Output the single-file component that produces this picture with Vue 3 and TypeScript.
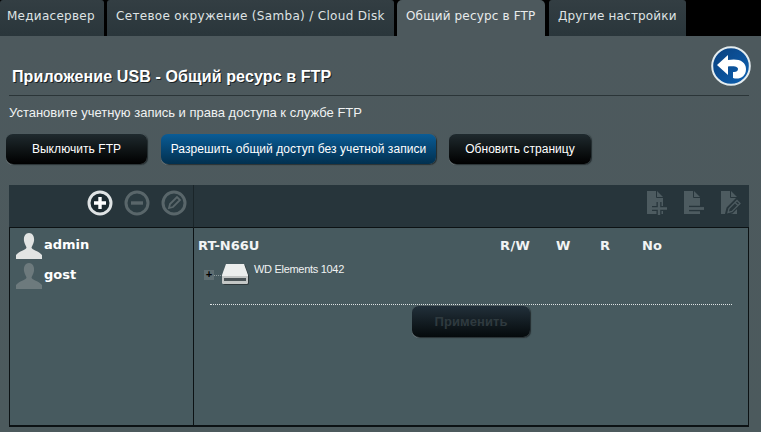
<script setup lang="ts">
const tabs = [
  { label: 'Медиасервер', width: 104 },
  { label: 'Сетевое окружение (Samba) / Cloud Disk', width: 287 },
  { label: 'Общий ресурс в FTP', width: 148, active: true },
  { label: 'Другие настройки', width: 137 },
]
const actions = [
  { label: 'Выключить FTP', cls: 'b1' },
  { label: 'Разрешить общий доступ без учетной записи', cls: 'b2 blue' },
  { label: 'Обновить страницу', cls: 'b3' },
]
</script>

<template>
  <div class="page">
    <nav class="tabs">
      <div
        v-for="t in tabs"
        :key="t.label"
        class="tab"
        :class="{ active: t.active }"
        :style="{ width: t.width + 'px' }"
      >{{ t.label }}</div>
    </nav>
    <main class="content">
      <header class="title-row">
        <h1>Приложение USB - Общий ресурс в FTP</h1>
        <svg class="back" viewBox="0 0 40 40" width="40" height="40">
          <defs>
            <linearGradient id="bg" x1="0" y1="0" x2="1" y2="1">
              <stop offset="0" stop-color="#0a3f7c" />
              <stop offset="1" stop-color="#0d62b4" />
            </linearGradient>
          </defs>
          <circle cx="20" cy="20" r="18.800" fill="url(#bg)" stroke="#e4ecef" stroke-width="2" />
          <path d="M6 19 L17 9 V14 C27 12 35 15 35 23 C35 31 28 34 22 32 V26 C25 26.500 27 25 27 23 C27 20.500 22 20 17 20.500 V29 Z" fill="#fff" />
        </svg>
      </header>
      <p class="desc">Установите учетную запись и права доступа к службе FTP</p>
      <div class="actions">
        <button v-for="a in actions" :key="a.label" class="btn" :class="a.cls">{{ a.label }}</button>
      </div>
      <section class="grid">
        <div class="bar bar-left">
          <svg viewBox="0 0 26 26" width="26" height="26">
            <circle cx="13" cy="13" r="11" fill="#1c2a30" stroke="#dfe3e4" stroke-width="3" />
            <path d="M13 7 V19 M7 13 H19" stroke="#fff" stroke-width="3.400" />
          </svg>
          <svg viewBox="0 0 26 26" width="26" height="26">
            <circle cx="13" cy="13" r="11" fill="#2b3b41" stroke="#59666a" stroke-width="3" />
            <path d="M7 13 H19" stroke="#59666a" stroke-width="3.400" />
          </svg>
          <svg viewBox="0 0 26 26" width="26" height="26">
            <circle cx="13" cy="13" r="11" fill="#2b3b41" stroke="#59666a" stroke-width="3" />
            <path d="M8 18 L9 14 L16 7 L19 10 L12 17 Z" fill="none" stroke="#59666a" stroke-width="1.800" />
          </svg>
        </div>
        <div class="bar bar-right">
          <svg viewBox="0 0 22 24" width="22" height="24">
            <path d="M1 0 H11 L17 6 V23 H1 Z" fill="#4d5b60" />
            <path d="M10.500 0 V6.500 H17" fill="none" stroke="#27353b" stroke-width="1" />
            <path d="M13 11 V24 M6 17.500 H21" stroke="#27353b" stroke-width="5" />
            <path d="M13 11 V24 M6 17.500 H21" stroke="#4d5b60" stroke-width="2.400" />
          </svg>
          <svg viewBox="0 0 22 24" width="22" height="24">
            <path d="M1 0 H11 L17 6 V23 H1 Z" fill="#4d5b60" />
            <path d="M10.500 0 V6.500 H17" fill="none" stroke="#27353b" stroke-width="1" />
            <path d="M6 17.500 H21" stroke="#27353b" stroke-width="5.500" />
            <path d="M6 17.500 H21" stroke="#4d5b60" stroke-width="2.800" />
          </svg>
          <svg viewBox="0 0 22 24" width="22" height="24">
            <path d="M1 0 H11 L17 6 V23 H1 Z" fill="#4d5b60" />
            <path d="M10.500 0 V6.500 H17" fill="none" stroke="#27353b" stroke-width="1" />
            <path d="M6 23 L7.500 17 L17 7.500 L21.500 12 L12 21.500 Z" fill="#27353b" stroke="#27353b" stroke-width="2" />
            <path d="M8 21.500 L9 17.500 L17 9.500 L20 12.500 L12 20.500 Z M15 11.500 L18 14.500" fill="none" stroke="#4d5b60" stroke-width="1.300" />
          </svg>
        </div>
        <aside class="users">
          <div class="user">
            <svg viewBox="0 0 28 28" width="28" height="28">
              <path d="M14 1 C18 1 19.500 5 19 9 C18.500 12 17 14 16.500 15.500 C17 18 24 19 27 23 V27 H1 V23 C4 19 11 18 11.500 15.500 C11 14 9.500 12 9 9 C8.500 5 10 1 14 1 Z" fill="#e2e4e3" />
            </svg>
            <span>admin</span>
          </div>
          <div class="user off">
            <svg viewBox="0 0 28 28" width="28" height="28">
              <path d="M14 1 C18 1 19.500 5 19 9 C18.500 12 17 14 16.500 15.500 C17 18 24 19 27 23 V27 H1 V23 C4 19 11 18 11.500 15.500 C11 14 9.500 12 9 9 C8.500 5 10 1 14 1 Z" fill="#6d7a7d" />
            </svg>
            <span>gost</span>
          </div>
        </aside>
        <div class="tree">
          <div class="tree-head">
            <strong class="router">RT-N66U</strong>
            <strong class="perm p1">R/W</strong>
            <strong class="perm p2">W</strong>
            <strong class="perm p3">R</strong>
            <strong class="perm p4">No</strong>
          </div>
          <div class="disk">
            <span class="expander"><i>+</i></span>
            <span class="link"></span>
            <svg class="hdd" viewBox="0 0 28 22" width="28" height="22">
              <path d="M5 1 H23 L27 12 V19 Q27 21 25 21 H3 Q1 21 1 19 V12 Z" fill="#2e383b" transform="translate(1 1)" />
              <path d="M5 1 H23 L27 12 V19 Q27 21 25 21 H3 Q1 21 1 19 V12 Z" fill="#eceeed" />
              <path d="M1 13 H27 V19 Q27 21 25 21 H3 Q1 21 1 19 Z" fill="#c3c6c5" />
              <rect x="3" y="15" width="22" height="3" fill="#4a5356" />
            </svg>
            <span class="disk-name">WD Elements 1042</span>
          </div>
          <div class="rule"></div>
          <div class="apply-row">
            <button class="btn apply" disabled>Применить</button>
          </div>
        </div>
      </section>
    </main>
  </div>
</template>

<style>
html, body { margin: 0; background: #000; }
</style>

<style scoped>
.page {
  width: 761px;
  height: 432px;
  overflow: hidden;
  background: #4d595d;
  font-family: "Liberation Sans", Arial, sans-serif;
  display: flex;
  flex-direction: column;
}
.tabs {
  height: 36px;
  background: #000;
  display: flex;
  gap: 3px;
  flex: none;
}
.tab {
  box-sizing: border-box;
  height: 36px;
  padding-left: 8px;
  white-space: nowrap;
  font: 12px/32px "DejaVu Sans", sans-serif;
  letter-spacing: 0.17px;
  color: #dfe3e4;
  background: linear-gradient(#333e43, #2a363b);
  border-radius: 3px 3px 0 0;
}
.tab:nth-child(1) { padding-left: 7px; letter-spacing: 0.27px; }
.tab:nth-child(2) { padding-left: 9px; letter-spacing: 0.32px; }
.tab:nth-child(3) { padding-left: 9px; background: #4d595d; color: #e8ebec; border-radius: 5px 5px 0 0; }
.tab:nth-child(4) { margin-left: 1px; padding-left: 9px; }
.content {
  padding: 0 12px 0 9px;
  flex: 1;
  background: linear-gradient(#4d595d, #4c5a5d);
}
.title-row {
  height: 59px;
  border-bottom: 1px solid #2b3538;
  display: flex;
  justify-content: space-between;
  align-items: flex-start;
}
h1 {
  margin: 31px 0 0 3px;
  font-size: 16px;
  line-height: 19px;
  font-weight: bold;
  letter-spacing: 0.12px;
  color: #fff;
  text-shadow: 1px 1px 0 #1a2225;
}
.back { margin: 10px -2px 0 0; }
.desc {
  margin: 8px 0 0;
  font-size: 13px;
  line-height: 18px;
  color: #f0f2f2;
}
.actions {
  margin: 11px 0 0 -3px;
  display: flex;
  gap: 14px;
}
.btn {
  box-sizing: border-box;
  height: 31px;
  padding: 0;
  border: 0;
  border-top: 1px solid #4d5a5e;
  border-radius: 7px;
  font: 12px "Liberation Sans", Arial, sans-serif;
  letter-spacing: 0.06px;
  color: #fff;
  background: linear-gradient(#1f2a2e, #000);
  box-shadow: 1px 1px 1px #222b2e, 0 1px 0 #8b9598;
}
.b1 { width: 141px; }
.b2 { width: 275px; }
.b3 { width: 142px; margin-left: -1px; }
.blue { background: linear-gradient(#0a5c96, #02304f); }
.grid {
  margin-top: 21px;
  display: grid;
  grid-template-columns: 185px 555px;
  grid-template-rows: 43px 199px;
}
.bar {
  background: #27353b;
  border-bottom: 1px solid #0c1214;
  box-sizing: border-box;
  display: flex;
  align-items: center;
  height: 43px;
  padding-bottom: 6px;
}
.bar-left {
  justify-content: flex-end;
  gap: 11px;
  padding-right: 6px;
  border-right: 1px solid #1a2529;
}
.bar-right {
  justify-content: flex-end;
  gap: 15px;
  padding-right: 7px;
}
.users {
  box-sizing: border-box;
  background: #475a5f;
  border-left: 1px solid #0c1214;
  border-right: 1px solid #0c1214;
  border-bottom: 2px solid #0c1214;
  padding-top: 3px;
}
.user {
  height: 30px;
  display: flex;
  align-items: center;
  gap: 1px;
  padding-left: 5px;
  font: bold 13px "DejaVu Sans", sans-serif;
  color: #fff;
}
.user span { position: relative; top: -2px; }
.tree {
  box-sizing: border-box;
  background: #475a5f;
  border-right: 1px solid #0c1214;
  border-bottom: 2px solid #0c1214;
  padding: 10px 0 0 4px;
}
.tree-head {
  display: grid;
  grid-template-columns: 302px 56px 44px 42px auto;
  font: bold 13px "DejaVu Sans", sans-serif;
  color: #f2f4f4;
}
.p1 { letter-spacing: 0.4px; }
.disk {
  margin: 9px 0 0 6px;
  display: flex;
  align-items: flex-start;
  height: 24px;
}
.expander {
  width: 10px;
  height: 10px;
  margin-top: 8px;
  background: #5f6e72;
  display: flex;
  align-items: center;
  justify-content: center;
}
.expander i {
  font: bold 11px/10px "Liberation Mono", monospace;
  color: #000;
}
.link {
  width: 7px;
  margin-top: 13px;
  border-top: 1px dotted #8d9a9d;
}
.hdd { margin-top: 1px; }
.disk-name {
  margin-left: 5px;
  font-size: 11px;
  line-height: 14px;
  letter-spacing: -0.3px;
  color: #f0f2f2;
}
.rule {
  margin: 18px 16px 0 12px;
  border-top: 1px dotted #dfe3e4;
}
.apply-row {
  padding-left: 214px;
}
.apply {
  width: 118px;
  height: 32px;
  font-weight: bold;
  font-size: 13px;
  color: #2f3a3f;
  background: linear-gradient(#22303a, #050a0c);
  opacity: 1;
}
</style>
